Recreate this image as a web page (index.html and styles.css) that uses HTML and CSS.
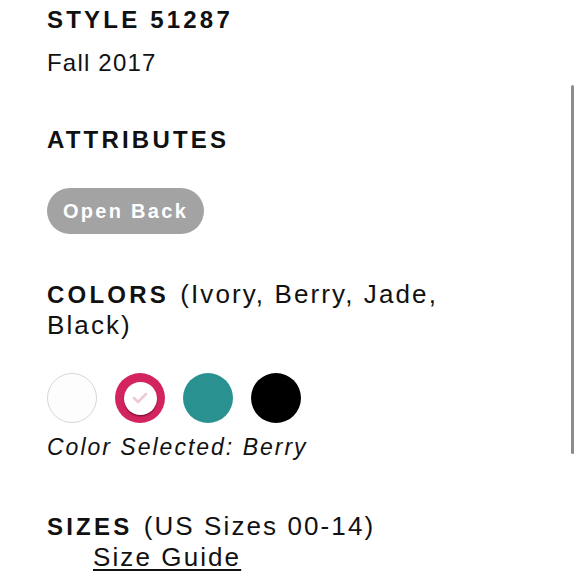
FILE: index.html
```html
<!DOCTYPE html>
<html>
<head>
<meta charset="utf-8">
<link rel="stylesheet" href="styles.css">
</head>
<body>
<main class="page">
  <h2 class="heading style-no">STYLE 51287</h2>
  <p class="text season">Fall 2017</p>

  <h2 class="heading attrs">ATTRIBUTES</h2>
  <div class="pills"><span class="pill">Open Back</span></div>

  <p class="text big colors"><b class="label">COLORS</b> (Ivory, Berry, Jade, Black)</p>
  <div class="swatches">
    <span class="swatch ivory"></span>
    <span class="swatch berry selected"><span class="inner"><svg width="16" height="12" viewBox="0 0 16 12"><polyline points="2,6 6,10 14,2" fill="none" stroke="#ecc9d8" stroke-width="2.6" stroke-linecap="round" stroke-linejoin="round"/></svg></span></span>
    <span class="swatch jade"></span>
    <span class="swatch black"></span>
  </div>
  <p class="selected-text">Color Selected: Berry</p>

  <p class="text big sizes"><b class="label">SIZES</b> (US Sizes 00-14)</p>
  <p class="text big guide"><a class="guide-link" href="#">Size Guide</a></p>
</main>
<div class="scrollbar"></div>
</body>
</html>
```
FILE: styles.css
```css
html, body {
  margin: 0;
  padding: 0;
  background: #ffffff;
}
body {
  font-family: "Liberation Sans", Arial, sans-serif;
  color: #111111;
}
.page {
  padding: 4px 0 0 47px;
  max-width: 440px;
}
.heading {
  margin: 0;
  font-size: 24px;
  line-height: 31px;
  font-weight: bold;
  letter-spacing: 3.2px;
}
.text {
  margin: 0;
  font-size: 24px;
  line-height: 31px;
  letter-spacing: 1.2px;
}
.text.big {
  font-size: 26px;
  letter-spacing: 2.1px;
}
.label {
  font-size: 24px;
  letter-spacing: 3.2px;
  margin-right: 2px;
}
.season { margin-top: 12px; }
.attrs { margin-top: 46px; }
.pills {
  margin-top: 33px;
  display: flex;
}
.pill {
  display: inline-flex;
  align-items: center;
  justify-content: center;
  width: 157px;
  height: 46px;
  border-radius: 23px;
  background: #a3a3a3;
  color: #ffffff;
  font-size: 20px;
  font-weight: bold;
  letter-spacing: 2.3px;
}
.colors { margin-top: 45px; }
.swatches {
  margin-top: 32px;
  display: flex;
  gap: 18px;
}
.swatch {
  width: 50px;
  height: 50px;
  border-radius: 50%;
  box-sizing: border-box;
  display: flex;
  align-items: center;
  justify-content: center;
}
.ivory {
  background: #fdfdfd;
  border: 1.5px solid #d6d6d6;
}
.berry { background: #d42460; }
.jade { background: #2a9191; }
.black { background: #000000; }
.inner {
  width: 33px;
  height: 33px;
  border-radius: 50%;
  background: #ffffff;
  display: flex;
  align-items: center;
  justify-content: center;
  box-shadow: 0 1.5px 1.5px rgba(60, 0, 20, 0.55);
}
.selected-text {
  margin: 9px 0 0 0;
  font-size: 23px;
  line-height: 31px;
  font-style: italic;
  letter-spacing: 2px;
}
.sizes { margin-top: 48px; }
.guide { padding-left: 46px; }
.guide-link {
  color: #111111;
  text-decoration: underline;
  text-underline-offset: 3px;
  text-decoration-thickness: 1.5px;
}
.scrollbar {
  position: fixed;
  left: 571px;
  top: 85px;
  width: 3px;
  height: 369px;
  border-radius: 2px;
  background: #8c8c8c;
}
```
